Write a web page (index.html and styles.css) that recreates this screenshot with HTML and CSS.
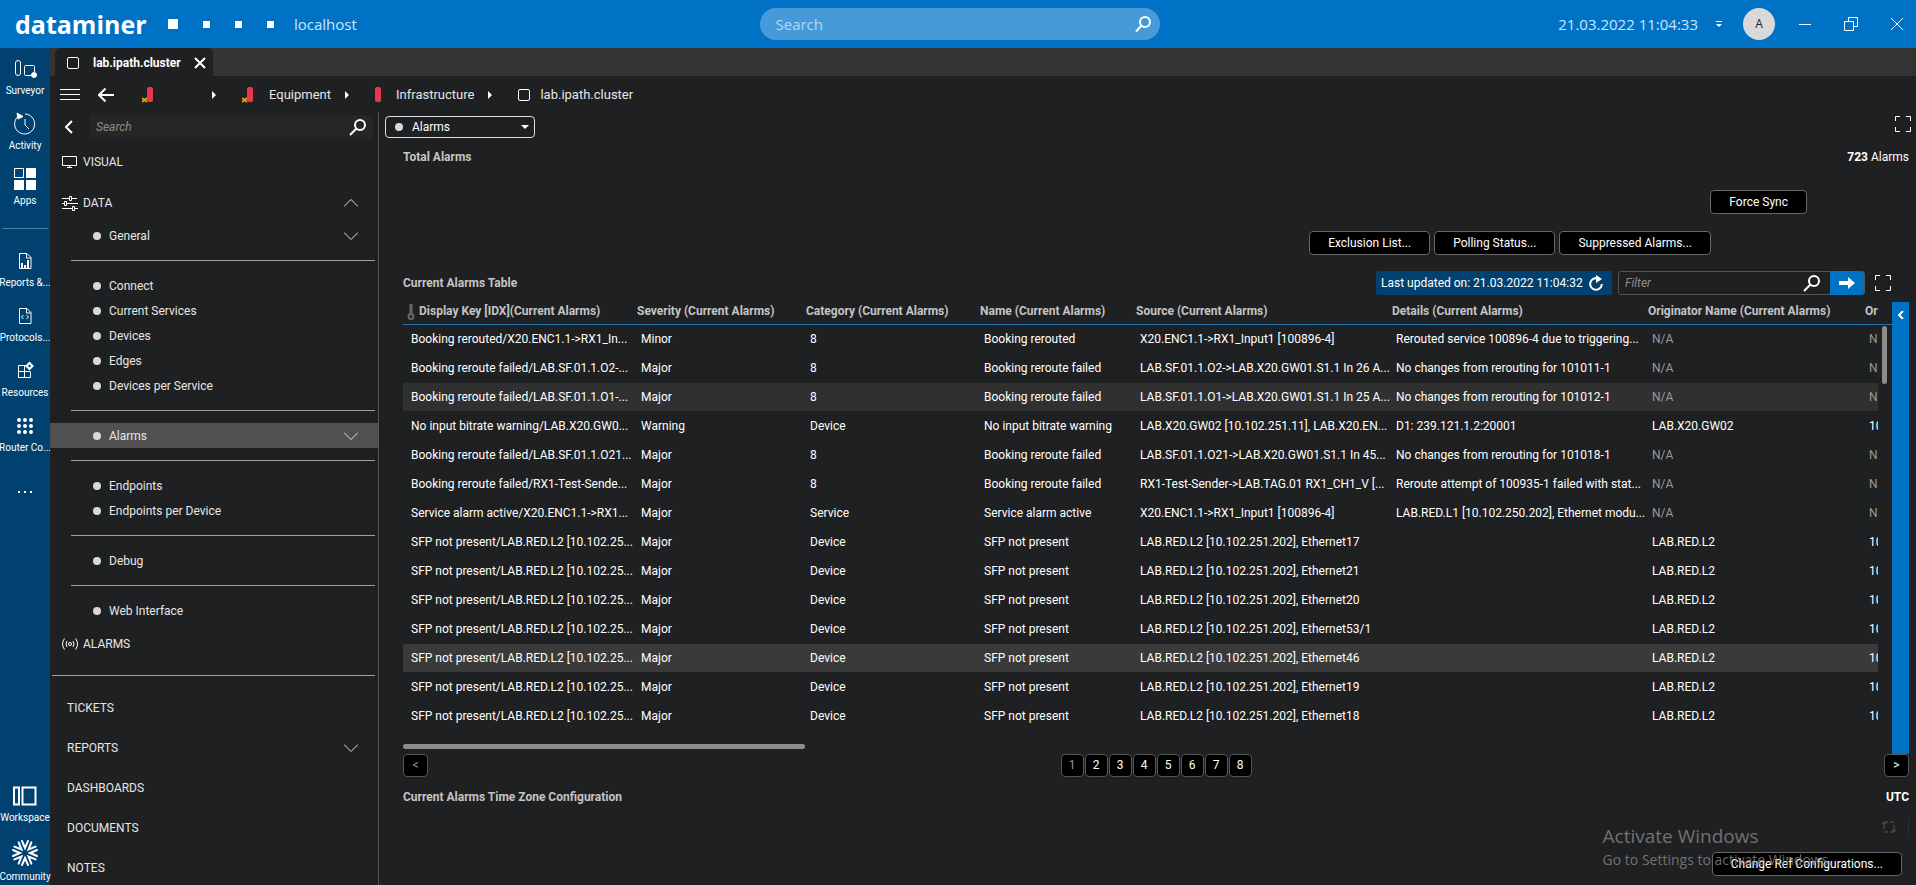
FILE: index.html
```html
<!DOCTYPE html>
<html lang="en">
<head>
  <meta charset="UTF-8" />
  <meta name="viewport" content="width=device-width, initial-scale=1.0" />
  <title>dataminer - lab.ipath.cluster</title>
  <link rel="stylesheet" href="styles.css">
</head>
<body>
  <header class="topbar">
    <div class="brand">
      <span class="logo">dataminer</span>
      <span class="squares"><i class="big"></i><i></i><i></i><i></i></span>
      <span class="host">localhost</span>
    </div>
    <form class="top-search">
      <input type="text" placeholder="Search" aria-label="Search" />
      <svg width="18" height="18" viewBox="0 0 18 18"><circle cx="11" cy="7" r="5" /><path d="M7.500 10.500L2 16.500" /></svg>
    </form>
    <div class="top-right">
      <span class="clock">21.03.2022 11:04:33</span>
      <svg class="clock-menu" width="6" height="8" viewBox="0 0 6 8"><path d="M0 1.500h6" stroke="#fff" /><path d="M0 4h6L3 7z" fill="#fff" stroke="none" /></svg>
      <span class="avatar">A</span>
      <button class="win" aria-label="Minimize"><svg width="14" height="14" viewBox="0 0 14 14"><path d="M1 7.500h12" /></svg></button>
      <button class="win" aria-label="Restore"><svg width="14" height="14" viewBox="0 0 14 14"><path d="M.5 4.500h9v9h-9zM4.500 4V.5h9v9h-4" /></svg></button>
      <button class="win" aria-label="Close"><svg width="14" height="14" viewBox="0 0 14 14"><path d="M1 1l12 12M13 1L1 13" /></svg></button>
    </div>
  </header>

  <div class="shell">
    <nav class="rail">
      <a href="#"><svg width="24" height="24" viewBox="0 0 24 24"><rect x="2.500" y="3.500" width="5" height="15" rx="2.500" /><path d="M18 18.500h-5.500q-1 0-1-1v-8q0-1 1-1h8q1 0 1 1V15" /><circle cx="21" cy="18" r="2.500" fill="#fff" /></svg>Surveyor</a>
      <a href="#"><svg width="24" height="24" viewBox="0 0 24 24"><path d="M5 4.500A10 10 0 1 0 12 2" /><path d="M4 1l1 6 5-2.500z" fill="#fff" /><path d="M12 7v6l4 4" /></svg>Activity</a>
      <a href="#"><svg width="24" height="24" viewBox="0 0 24 24"><rect x="1.500" y="1.500" width="9" height="9" /><path d="M13 1h10v10H13zM1 13h10v10H1zM13 13h10v10H13z" fill="#fff" stroke="none" /></svg>Apps</a>
      <hr />
      <a href="#"><svg width="24" height="24" viewBox="0 0 24 24"><path d="M6.500 4.500H14l4 4v11H6.500z" /><path d="M13.500 4v5H18" /><path d="M8 14h2v5H8zM11 16h2v3h-2zM14 11h2v8h-2z" fill="#fff" stroke="none" /></svg>Reports &amp;...</a>
      <a href="#"><svg width="24" height="24" viewBox="0 0 24 24"><path d="M6.500 4.500H14l4 4v11H6.500z" /><path d="M13.500 4v5H18M10.500 11L8.500 13l2 2M13.500 11l2 2-2 2" /></svg>Protocols...</a>
      <a href="#"><svg width="24" height="24" viewBox="0 0 24 24"><path d="M13 6.500H5.500v12h12V13M5.500 12.500h12M11.500 6.500v12" /><path d="M16.500 4l3 3-3 3-3-3z" stroke-width="2" /></svg>Resources</a>
      <a href="#"><svg class="dots" width="24" height="24" viewBox="0 0 24 24"><path d="M6 6h0M12 6h0M18 6h0M6 12h0M12 12h0M18 12h0M6 18h0M12 18h0M18 18h0" /></svg>Router Co...</a>
      <button class="more" aria-label="More"><svg width="16" height="4" viewBox="0 0 16 4"><path d="M1 1h2v2H1zM7 1h2v2H7zM13 1h2v2h-2z" fill="#fff" /></svg></button>
      <div class="rail-bottom">
        <a href="#"><svg width="24" height="24" viewBox="0 0 24 24"><path d="M1 3.500h5v17H1zM9.500 3.500h13v17h-13z" stroke-width="2" /></svg>Workspace</a>
        <a href="#"><svg width="28" height="28" viewBox="-14 -14 28 28" stroke-linecap="round"><g id="ray"><path d="M-3-12L0-5 3-12" stroke-width="2" fill="none" /></g><use href="#ray" transform="rotate(45)" /><use href="#ray" transform="rotate(90)" /><use href="#ray" transform="rotate(135)" /><use href="#ray" transform="rotate(180)" /><use href="#ray" transform="rotate(225)" /><use href="#ray" transform="rotate(270)" /><use href="#ray" transform="rotate(315)" /></svg>Community</a>
      </div>
    </nav>

    <div class="workspace">
      <div class="tabs">
        <div class="tab">
          <span class="box"></span>
          <span class="tab-name">lab.ipath.cluster</span>
          <button aria-label="Close tab"><svg width="12" height="12" viewBox="0 0 12 12"><path d="M1 1l10 10M11 1L1 11" /></svg></button>
        </div>
      </div>

      <div class="crumbs">
        <button aria-label="Menu"><svg width="20" height="12" viewBox="0 0 20 12"><path d="M0 .5h20M0 5.500h20M0 10.500h20" /></svg></button>
        <button class="back" aria-label="Back"><svg width="16" height="14" viewBox="0 0 16 14"><path d="M16 7H1M7.500 .5L1 7l6.500 6.500" stroke-width="2" /></svg></button>
        <a href="#" class="crumb first"><svg width="12" height="16" viewBox="0 0 12 16"><rect x="5" y="0" width="6" height="15" rx="2" fill="#e8384a" stroke="none" /><path d="M0 11l5 4M5 11l-5 4" stroke="#e0a010" stroke-width="2" /></svg></a>
        <span class="arrow"></span>
        <a href="#" class="crumb"><svg width="12" height="16" viewBox="0 0 12 16"><rect x="5" y="0" width="6" height="15" rx="2" fill="#e8384a" stroke="none" /><path d="M0 11l5 4M5 11l-5 4" stroke="#e0a010" stroke-width="2" /></svg>Equipment</a>
        <span class="arrow"></span>
        <a href="#" class="crumb"><svg width="6" height="16" viewBox="0 0 6 16"><rect x="0" y="0" width="6" height="15" rx="2" fill="#e8384a" stroke="none" /></svg>Infrastructure</a>
        <span class="arrow"></span>
        <a href="#" class="crumb last"><span class="box"></span>lab.ipath.cluster</a>
      </div>

      <div class="body">
        <aside class="sidebar">
          <div class="side-search">
            <button aria-label="Collapse"><svg width="8" height="14" viewBox="0 0 8 14"><path d="M7 1L1 7l6 6" stroke-width="2" /></svg></button>
            <div class="side-input">
              <input type="text" placeholder="Search" aria-label="Search pages" />
              <svg width="18" height="18" viewBox="0 0 18 18"><circle cx="11" cy="7" r="5" stroke-width="2" /><path d="M7.500 10.500L1 17" stroke-width="2" /></svg>
            </div>
          </div>
          <a href="#" class="head"><svg width="16" height="14" viewBox="0 0 16 14"><path d="M.5 1.500h14v9H.5zM7.500 10.500v2M5 12.500h5" /></svg>VISUAL</a>
          <a href="#" class="head"><svg width="16" height="16" viewBox="0 0 16 16"><path d="M0 3.500h7M10 3.500h5M0 8.500h2M5 8.500h11M0 13.500h10M13 13.500h3M7.500 1.500h2v4h-2zM2.500 6.500h2v4h-2zM10.500 11.500h2v4h-2z" /></svg>DATA<svg class="chev" width="14" height="8" viewBox="0 0 14 8"><path d="M0 7.500l7-7 7 7" /></svg></a>
          <a href="#" class="item">General<svg class="chev" width="14" height="8" viewBox="0 0 14 8"><path d="M0 .5l7 7 7-7" /></svg></a>
          <hr />
          <a href="#" class="item">Connect</a>
          <a href="#" class="item">Current Services</a>
          <a href="#" class="item">Devices</a>
          <a href="#" class="item">Edges</a>
          <a href="#" class="item">Devices per Service</a>
          <hr />
          <a href="#" class="item active">Alarms<svg class="chev" width="14" height="8" viewBox="0 0 14 8"><path d="M0 .5l7 7 7-7" /></svg></a>
          <hr />
          <a href="#" class="item">Endpoints</a>
          <a href="#" class="item">Endpoints per Device</a>
          <hr />
          <a href="#" class="item">Debug</a>
          <hr />
          <a href="#" class="item">Web Interface</a>
          <a href="#" class="head"><svg width="16" height="12" viewBox="0 0 16 12"><circle cx="8" cy="6" r="1.500" /><path d="M5 3q-2 3 0 6M11 3q2 3 0 6M2.500 .5q-4 5.500 0 11M13.500 .5q4 5.500 0 11" /></svg>ALARMS</a>
          <hr class="wide" />
          <a href="#" class="head plain">TICKETS</a>
          <a href="#" class="head plain">REPORTS<svg class="chev" width="14" height="8" viewBox="0 0 14 8"><path d="M0 .5l7 7 7-7" /></svg></a>
          <a href="#" class="head plain">DASHBOARDS</a>
          <a href="#" class="head plain">DOCUMENTS</a>
          <a href="#" class="head plain">NOTES</a>
        </aside>

        <main class="content">
          <div class="page-bar">
            <div class="page-select">
              <select aria-label="Page"><option>Alarms</option></select>
            </div>
            <button class="icon" aria-label="Full screen"><svg width="16" height="16" viewBox="0 0 16 16"><path d="M.5 5V.5H5M11 .5h4.500V5M15.500 11v4.500H11M5 15.500H.5V11" /></svg></button>
          </div>

          <div class="total">
            <h2>Total Alarms</h2>
            <p><b>723</b> Alarms</p>
          </div>

          <div class="actions sync"><button class="btn">Force Sync</button></div>
          <div class="actions lists">
            <button class="btn">Exclusion List...</button>
            <button class="btn">Polling Status...</button>
            <button class="btn">Suppressed Alarms...</button>
          </div>

          <div class="table-bar">
            <h2>Current Alarms Table</h2>
            <button class="updated">Last updated on: 21.03.2022 11:04:32<svg width="14" height="16" viewBox="0 0 14 16"><path d="M9 3.500A5.800 5.800 0 1 0 12.800 9" stroke-width="2" /><path d="M7 0l6 4-6 4z" fill="#fff" stroke="none" /></svg></button>
            <form class="filter">
              <input type="text" placeholder="Filter" aria-label="Filter" />
              <svg width="18" height="18" viewBox="0 0 18 18"><circle cx="11" cy="7" r="5" stroke-width="2" /><path d="M7.500 10.500L1 17" stroke-width="2" /></svg>
              <button type="button" aria-label="Apply filter"><svg width="16" height="12" viewBox="0 0 16 12"><path d="M0 4h9V0l7 6-7 6V8H0z" fill="#fff" stroke="none" /></svg></button>
            </form>
            <button class="icon" aria-label="Expand table"><svg width="16" height="16" viewBox="0 0 16 16"><path d="M.5 5V.5H5M11 .5h4.500V5M15.500 11v4.500H11M5 15.500H.5V11" /></svg></button>
          </div>

          <div class="table-area">
            <div class="table-clip">
              <table>
                <colgroup><col class="c-key"><col class="c-sev"><col class="c-cat"><col class="c-name"><col class="c-src"><col class="c-det"><col class="c-orig"><col class="c-id"></colgroup>
                <thead>
                  <tr>
                    <th><svg width="8" height="16" viewBox="0 0 8 16"><path d="M2.500 0h3v10h-3z" fill="#666" stroke="none" /><circle cx="4" cy="12.500" r="2.500" stroke="#666" stroke-width="2" /></svg>Display Key [IDX](Current Alarms)</th>
                    <th>Severity (Current Alarms)</th>
                    <th>Category (Current Alarms)</th>
                    <th>Name (Current Alarms)</th>
                    <th>Source (Current Alarms)</th>
                    <th>Details (Current Alarms)</th>
                    <th>Originator Name (Current Alarms)</th>
                    <th>Or</th>
                  </tr>
                </thead>
                <tbody>
                  <tr><td>Booking rerouted/X20.ENC1.1-&gt;RX1_In...</td><td>Minor</td><td>8</td><td>Booking rerouted</td><td>X20.ENC1.1-&gt;RX1_Input1 [100896-4]</td><td>Rerouted service 100896-4 due to triggering...</td><td class="na">N/A</td><td class="na">N</td></tr>
                  <tr><td>Booking reroute failed/LAB.SF.01.1.O2-...</td><td>Major</td><td>8</td><td>Booking reroute failed</td><td>LAB.SF.01.1.O2-&gt;LAB.X20.GW01.S1.1 In 26 A...</td><td>No changes from rerouting for 101011-1</td><td class="na">N/A</td><td class="na">N</td></tr>
                  <tr class="hover"><td>Booking reroute failed/LAB.SF.01.1.O1-...</td><td>Major</td><td>8</td><td>Booking reroute failed</td><td>LAB.SF.01.1.O1-&gt;LAB.X20.GW01.S1.1 In 25 A...</td><td>No changes from rerouting for 101012-1</td><td class="na">N/A</td><td class="na">N</td></tr>
                  <tr><td>No input bitrate warning/LAB.X20.GW0...</td><td>Warning</td><td>Device</td><td>No input bitrate warning</td><td>LAB.X20.GW02 [10.102.251.11], LAB.X20.EN...</td><td>D1: 239.121.1.2:20001</td><td>LAB.X20.GW02</td><td>10</td></tr>
                  <tr><td>Booking reroute failed/LAB.SF.01.1.O21...</td><td>Major</td><td>8</td><td>Booking reroute failed</td><td>LAB.SF.01.1.O21-&gt;LAB.X20.GW01.S1.1 In 45...</td><td>No changes from rerouting for 101018-1</td><td class="na">N/A</td><td class="na">N</td></tr>
                  <tr><td>Booking reroute failed/RX1-Test-Sende...</td><td>Major</td><td>8</td><td>Booking reroute failed</td><td>RX1-Test-Sender-&gt;LAB.TAG.01 RX1_CH1_V [...</td><td>Reroute attempt of 100935-1 failed with stat...</td><td class="na">N/A</td><td class="na">N</td></tr>
                  <tr><td>Service alarm active/X20.ENC1.1-&gt;RX1...</td><td>Major</td><td>Service</td><td>Service alarm active</td><td>X20.ENC1.1-&gt;RX1_Input1 [100896-4]</td><td>LAB.RED.L1 [10.102.250.202], Ethernet modu...</td><td class="na">N/A</td><td class="na">N</td></tr>
                  <tr><td>SFP not present/LAB.RED.L2 [10.102.25...</td><td>Major</td><td>Device</td><td>SFP not present</td><td>LAB.RED.L2 [10.102.251.202], Ethernet17</td><td></td><td>LAB.RED.L2</td><td>10</td></tr>
                  <tr><td>SFP not present/LAB.RED.L2 [10.102.25...</td><td>Major</td><td>Device</td><td>SFP not present</td><td>LAB.RED.L2 [10.102.251.202], Ethernet21</td><td></td><td>LAB.RED.L2</td><td>10</td></tr>
                  <tr><td>SFP not present/LAB.RED.L2 [10.102.25...</td><td>Major</td><td>Device</td><td>SFP not present</td><td>LAB.RED.L2 [10.102.251.202], Ethernet20</td><td></td><td>LAB.RED.L2</td><td>10</td></tr>
                  <tr><td>SFP not present/LAB.RED.L2 [10.102.25...</td><td>Major</td><td>Device</td><td>SFP not present</td><td>LAB.RED.L2 [10.102.251.202], Ethernet53/1</td><td></td><td>LAB.RED.L2</td><td>10</td></tr>
                  <tr class="selected"><td>SFP not present/LAB.RED.L2 [10.102.25...</td><td>Major</td><td>Device</td><td>SFP not present</td><td>LAB.RED.L2 [10.102.251.202], Ethernet46</td><td></td><td>LAB.RED.L2</td><td>10</td></tr>
                  <tr><td>SFP not present/LAB.RED.L2 [10.102.25...</td><td>Major</td><td>Device</td><td>SFP not present</td><td>LAB.RED.L2 [10.102.251.202], Ethernet19</td><td></td><td>LAB.RED.L2</td><td>10</td></tr>
                  <tr><td>SFP not present/LAB.RED.L2 [10.102.25...</td><td>Major</td><td>Device</td><td>SFP not present</td><td>LAB.RED.L2 [10.102.251.202], Ethernet18</td><td></td><td>LAB.RED.L2</td><td>10</td></tr>
                </tbody>
              </table>
              <div class="hscroll"></div>
            </div>
            <div class="vscroll"><span></span></div>
            <button class="drawer" aria-label="Open side panel"><svg width="6" height="8" viewBox="0 0 6 8"><path d="M5 0L1 4l4 4" stroke-width="2" /></svg></button>
          </div>

          <div class="pager">
            <button class="page step" disabled>&lt;</button>
            <div class="pages">
              <button class="page" disabled>1</button>
              <button class="page">2</button>
              <button class="page">3</button>
              <button class="page">4</button>
              <button class="page">5</button>
              <button class="page">6</button>
              <button class="page">7</button>
              <button class="page">8</button>
            </div>
            <button class="page step">&gt;</button>
          </div>

          <div class="zone">
            <h2>Current Alarms Time Zone Configuration</h2>
            <b>UTC</b>
          </div>
          <div class="sync-state"><svg width="14" height="14" viewBox="0 0 14 14"><path d="M2 9V2h4M0 4l2-2 2 2M12 5v7H8M14 10l-2 2-2-2M8 2h4M2 12h4" /></svg></div>
          <div class="actions config"><button class="btn">Change Ref Configurations...</button></div>
        </main>
      </div>
    </div>
  </div>

  <div class="watermark">
    <p class="big">Activate Windows</p>
    <p>Go to Settings to activate Windows.</p>
  </div>
</body>
</html>
```
FILE: styles.css
```css
* {
  box-sizing: border-box;
}
body {
  margin: 0;
  height: 100vh;
  display: flex;
  flex-direction: column;
  overflow: hidden;
  background-color: #1f2021;
  color: #e6e6e6;
  font-family: Roboto, "Open Sans", sans-serif;
  font-size: 12px;
  line-height: 16px;
}
a {
  color: inherit;
  text-decoration: none;
}
button, input, select {
  font: inherit;
  color: inherit;
  background: none;
  border: none;
  margin: 0;
  padding: 0;
  outline: none;
}
svg {
  flex: none;
  fill: none;
  stroke: #fff;
}
h2, p {
  margin: 0;
  font-size: 12px;
}
h2 {
  color: #c4c4c4;
}
hr {
  border: none;
  height: 1px;
  background-color: #a0a0a0;
}

/* top bar */
.topbar {
  display: grid;
  grid-template-columns: 1fr 400px 1fr;
  align-items: center;
  height: 48px;
  padding: 0 12px 0 15px;
  background-color: #0072c6;
  font-family: "Open Sans", sans-serif;
  flex: none;
}
.brand, .top-right {
  display: flex;
  align-items: center;
}
.logo {
  font-size: 25px;
  font-weight: bold;
  color: #fff;
  width: 153px;
}
.squares {
  display: flex;
  align-items: center;
  gap: 25px;
  width: 126px;
}
.squares i {
  width: 7px;
  height: 7px;
  background-color: #fff;
}
.squares .big {
  width: 10px;
  height: 10px;
}
.host, .clock {
  font-size: 15px;
  color: #cfe5f6;
}
.top-search {
  display: flex;
  align-items: center;
  height: 32px;
  padding: 0 8px 0 16px;
  border-radius: 16px;
  background-color: #479ad9;
}
.top-search input {
  flex: 1;
  font-size: 15px;
}
.top-search input::placeholder {
  color: #b4d8f2;
}
.top-search svg {
  stroke-width: 2;
}
.top-right {
  justify-content: flex-end;
}
.clock-menu {
  margin: 0 21px 0 18px;
}
.avatar {
  width: 32px;
  height: 32px;
  margin-right: 23px;
  border-radius: 50%;
  background-color: #d9d9d9;
  color: #222;
  line-height: 32px;
  text-align: center;
}
.win {
  display: flex;
}
.win + .win {
  margin-left: 32px;
}

/* left rail */
.shell {
  display: flex;
  flex: 1;
  min-height: 0;
}
.rail {
  width: 50px;
  flex: none;
  display: flex;
  flex-direction: column;
  background-color: #004170;
}
.rail a {
  display: flex;
  flex-direction: column;
  align-items: center;
  gap: 2px;
  height: 55px;
  padding-top: 9px;
  font-size: 10px;
  color: #fff;
  white-space: nowrap;
}
.rail hr {
  width: 46px;
  margin: 15px 2px 11px;
  background-color: #4d7a9b;
}
.rail .dots {
  stroke-width: 4;
  stroke-linecap: round;
}
.more {
  margin-top: 28px;
  line-height: 4px;
}
.more svg {
  stroke: none;
}
.rail-bottom {
  margin-top: auto;
}

/* tabs and breadcrumbs */
.workspace {
  flex: 1;
  min-width: 0;
  display: flex;
  flex-direction: column;
}
.tabs {
  height: 28px;
  padding-left: 5px;
  background-color: #333;
}
.tab {
  display: flex;
  align-items: center;
  width: 158px;
  height: 28px;
  padding: 2px 7px 0 12px;
  border-radius: 6px 6px 0 0;
  background-color: #1f2021;
  color: #fff;
  font-weight: bold;
}
.tab button {
  display: flex;
}
.tab svg {
  stroke-width: 2;
}
.tab-name {
  flex: 1;
  margin-left: 14px;
}
.box {
  width: 12px;
  height: 12px;
  border: 1px solid #fff;
  border-radius: 2px;
}
.crumbs {
  display: flex;
  align-items: center;
  height: 36px;
  padding: 2px 0 0 10px;
}
.crumbs button {
  display: flex;
}
.crumbs .back {
  margin: 0 28px 0 18px;
}
.crumb {
  display: flex;
  align-items: center;
  gap: 15px;
  font-size: 13px;
}
.crumb.first {
  width: 70px;
}
.crumb.last {
  gap: 10px;
}
.arrow {
  margin: 0 26px 0 14px;
  border: 4px solid transparent;
  border-left-color: #fff;
  border-right: none;
}
.crumb.first + .arrow {
  margin-left: 0;
}

/* sidebar */
.body {
  display: flex;
  flex: 1;
  min-height: 0;
}
.sidebar {
  width: 329px;
  flex: none;
  border-right: 1px solid #555;
}
.side-search {
  display: flex;
  align-items: center;
  gap: 17px;
  height: 29px;
  padding: 0 5px 0 15px;
}
.side-search button {
  display: flex;
}
.side-input {
  display: flex;
  align-items: center;
  flex: 1;
  height: 24px;
  padding: 0 6px;
  background-color: #262626;
}
.side-input input, .filter input {
  flex: 1;
  min-width: 0;
  font-style: italic;
}
.side-input input::placeholder, .filter input::placeholder {
  color: #8c8c8c;
}
.head {
  display: flex;
  align-items: center;
  gap: 5px;
  height: 41px;
  padding: 0 20px 0 12px;
}
.head.plain {
  height: 40px;
  padding-left: 17px;
}
.item {
  display: flex;
  align-items: center;
  height: 25px;
  padding: 0 20px 0 43px;
}
.item::before {
  content: "";
  width: 8px;
  height: 8px;
  margin-right: 8px;
  border-radius: 50%;
  background-color: #d8d8d8;
}
.item.active {
  background-color: #505050;
}
.chev {
  margin-left: auto;
  stroke: #ddd;
}
.sidebar hr {
  margin: 12px 3px 12px 21px;
}
.sidebar hr.wide {
  margin: 11px 3px 12px 2px;
}

/* content */
.content {
  flex: 1;
  min-width: 0;
  padding: 0 7px 0 24px;
}
.page-bar {
  display: flex;
  justify-content: space-between;
  align-items: flex-start;
  margin: 4px -2px 0 -18px;
}
.icon {
  display: flex;
  align-items: center;
}
.page-select {
  display: flex;
  align-items: center;
  width: 150px;
  height: 22px;
  padding: 0 5px 0 9px;
  border: 1px solid #ddd;
  border-radius: 4px;
}
.page-select::before {
  content: "";
  width: 8px;
  height: 8px;
  margin-right: 9px;
  border-radius: 50%;
  background-color: #d8d8d8;
}
.page-select::after {
  content: "";
  border: 4px solid transparent;
  border-top-color: #fff;
  border-bottom: none;
}
.page-select select {
  flex: 1;
  appearance: none;
  color: #fff;
}
.total {
  display: flex;
  justify-content: space-between;
  margin-top: 11px;
  color: #fff;
}
.actions {
  display: flex;
  justify-content: flex-end;
  gap: 4px;
}
.btn {
  height: 24px;
  padding: 0 18px;
  border: 1px solid #666;
  border-radius: 4px;
  background-color: #000;
  color: #fff;
}
.sync {
  margin-top: 25px;
  padding-right: 102px;
}
.lists {
  margin-top: 17px;
  padding-right: 198px;
}
.table-bar {
  display: flex;
  align-items: center;
  height: 24px;
  margin-top: 16px;
  padding-right: 18px;
}
.table-bar h2 {
  flex: 1;
}
.updated {
  display: flex;
  align-items: center;
  justify-content: space-between;
  width: 236px;
  height: 24px;
  padding: 0 9px 0 5px;
  border-radius: 2px;
  background-color: #004170;
  color: #fff;
  white-space: nowrap;
}
.filter {
  display: flex;
  align-items: center;
  width: 247px;
  height: 24px;
  margin: 0 10px 0 6px;
  border: 1px solid #555;
  border-radius: 3px;
  padding-left: 6px;
}
.filter button {
  display: flex;
  align-items: center;
  justify-content: center;
  width: 34px;
  height: 24px;
  margin-left: 9px;
  border-radius: 0 3px 3px 0;
  background-color: #0072c6;
}
.table-area {
  display: flex;
  margin-top: 7px;
}
.table-clip {
  flex: 1;
  min-width: 0;
  overflow: hidden;
}
table {
  width: 100%;
  table-layout: fixed;
  border-collapse: collapse;
}
.c-key { width: 234px; }
.c-sev { width: 169px; }
.c-cat { width: 174px; }
.c-name { width: 156px; }
.c-src { width: 256px; }
.c-det { width: 256px; }
.c-orig { width: 217px; }
th {
  height: 22px;
  padding: 0 0 3px;
  text-align: left;
  white-space: nowrap;
  color: #c4c4c4;
  border-bottom: 1px solid #2272ad;
}
th svg {
  margin: 0 4px 0 4px;
  vertical-align: middle;
}
td {
  height: 29px;
  padding: 0 0 0 4px;
  white-space: nowrap;
  overflow: hidden;
  color: #fff;
  border-bottom: 1px solid #1f2021;
}
td:first-child {
  padding-left: 8px;
}
td.na {
  color: #9a9a9a;
}
.hover {
  background-color: #303030;
}
.selected {
  background-color: #3a3a3a;
}
.hscroll {
  width: 402px;
  height: 5px;
  margin: 13px 0 5px;
  border-radius: 3px;
  background-color: #8c8c8c;
}
.vscroll {
  width: 14px;
}
/* keeps the header rule running above the scrollbar */
.vscroll::before {
  content: "";
  display: block;
  height: 22px;
  border-bottom: 1px solid #2272ad;
}
.vscroll span {
  display: block;
  width: 5px;
  height: 58px;
  margin: 1px 0 0 4px;
  border-radius: 3px;
  background-color: #8c8c8c;
}
.drawer {
  display: flex;
  justify-content: center;
  width: 17px;
  padding-top: 9px;
  background-color: #0072c6;
}
.pager {
  display: flex;
  justify-content: space-between;
}
.pages {
  display: flex;
  gap: 1px;
}
.page {
  width: 23px;
  height: 23px;
  border: 1px solid #555;
  border-radius: 4px;
  background-color: #000;
  color: #fff;
}
.page.step {
  width: 25px;
}
.page:disabled {
  color: #999;
}
.zone {
  display: flex;
  justify-content: space-between;
  margin-top: 12px;
  color: #fff;
}
.sync-state {
  display: flex;
  align-items: center;
  justify-content: flex-end;
  height: 20px;
  margin-top: 12px;
  padding-right: 12px;
  border-right: 1px solid #2a3036;
}
.sync-state svg {
  stroke: #555;
}
.config {
  margin-top: 15px;
  padding-right: 7px;
}

/* activation notice drawn over the page */
.watermark {
  position: absolute;
  right: 84px;
  bottom: 15px;
  color: #868686;
  font-family: "Open Sans", sans-serif;
  opacity: 0.8;
  pointer-events: none;
}
.watermark p {
  font-size: 14px;
  line-height: 20px;
}
.watermark .big {
  font-size: 19px;
  line-height: 28px;
}
```
